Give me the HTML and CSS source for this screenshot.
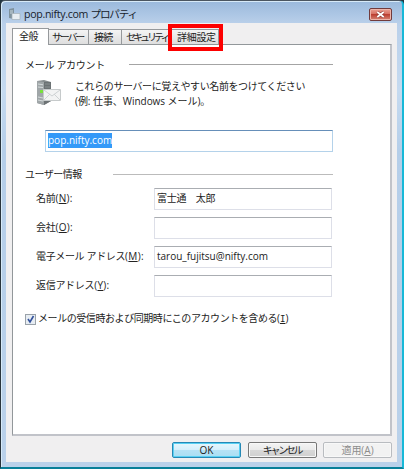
FILE: index.html
```html
<!DOCTYPE html>
<html lang="ja">
<head>
<meta charset="utf-8">
<title>pop.nifty.com プロパティ</title>
<link rel="stylesheet" href="styles.css">
</head>
<body>
<div class="window">
  <header class="titlebar">
    <svg class="app-icon" width="13" height="13" viewBox="0 0 13 13">
      <path d="M1 1l5-1v11l-5-1z" fill="#7f929d"/>
      <path d="M2 3h3M2 5h3" stroke="#cad8df"/>
      <path d="M4 5.500h8v6H4z" fill="#e8eef2" stroke="#a5b0b7" stroke-width=".7"/>
    </svg>
    <h1 class="caption">pop.nifty.com <span>プロパティ</span></h1>
    <button class="close" aria-label="閉じる">
      <svg width="9" height="7" viewBox="0 0 9 7"><path d="M1.3 1l6.4 5M7.7 1L1.3 6" stroke="#8b3731" stroke-width="3"/><path d="M1.3 1l6.4 5M7.7 1L1.3 6" stroke="#fff" stroke-width="1.8"/></svg>
    </button>
  </header>
  <main class="client">
    <nav class="tabs">
      <div class="tab active"><span>全般</span></div>
      <div class="tab server"><span>サーバー</span></div>
      <div class="tab connect"><span>接続</span></div>
      <div class="tab security"><span>セキュリティ</span></div>
      <div class="tab detail"><span>詳細設定</span><i class="marker"></i></div>
    </nav>
    <section class="panel">
      <div class="heading account"><span>メール アカウント</span><i class="rule"></i></div>
      <div class="intro">
        <svg class="server-icon" width="25" height="26" viewBox="0 0 25 26">
          <path d="M1 1l7-1 7 2v19l-7 4-7-2z" fill="#858b8d"/>
          <path d="M1 1l7 1v23l-7-2z" fill="#a0a6a8"/>
          <path d="M8 2l7 0v19l-7 4z" fill="#6c7274"/>
          <path d="M2 4l5 .7M2 7l5 .5M2 17l5 1M2 20l5 1" stroke="#d3d9da" stroke-width="1.1"/>
          <path d="M9 4h5M9 7h5" stroke="#899092"/>
          <path d="M7.500 9.500h17v11h-17z" fill="#f2f3f3" stroke="#c6cacb"/>
          <path d="M8 10l8 6 8-6M8 20l6-6M24 20l-6-6" fill="none" stroke="#ced2d3"/>
          <rect x="4" y="10" width="3" height="3" fill="#78e13c"/>
        </svg>
        <p class="hint"><span class="line1">これらのサーバーに覚えやすい名前をつけてください</span><br><span class="line2">(例: 仕事、Windows メール)。</span></p>
      </div>
      <div class="input focused"><span class="selected">pop.nifty.com</span></div>
      <div class="heading user"><span>ユーザー情報</span><i class="rule"></i></div>
      <div class="form">
        <div class="row"><label>名前<b>(<u>N</u>):</b></label><div class="input"><span class="name">富士通　太郎</span></div></div>
        <div class="row"><label>会社<b>(<u>O</u>):</b></label><div class="input"></div></div>
        <div class="row"><label class="mail">電子メール アドレス<b>(<u>M</u>):</b></label><div class="input"><span class="address">tarou_fujitsu@nifty.com</span></div></div>
        <div class="row"><label class="reply">返信アドレス<b>(<u>Y</u>):</b></label><div class="input"></div></div>
      </div>
      <div class="check">
        <svg width="11" height="11" viewBox="0 0 11 11"><rect x=".5" y=".5" width="10" height="10" fill="#e7edf3" stroke="#9aa2a9"/><path d="M3 5l2 3 3.500-6" fill="none" stroke="#31509b" stroke-width="1.6"/></svg>
        <span>メールの受信時および同期時にこのアカウントを含める<b>(<u class="serif-i">I</u>)</b></span>
      </div>
    </section>
    <footer class="buttons">
      <button class="button default">OK</button>
      <button class="button cancel"><span>キャンセル</span></button>
      <button class="button disabled">適用(<u>A</u>)</button>
    </footer>
  </main>
</div>
</body>
</html>
```
FILE: styles.css
```css
* { box-sizing: border-box; }
body { margin: 0; background: #223642; color: #222; font: 10px/15px "Open Sans", "Noto Sans CJK JP", sans-serif; }
button { font: inherit; padding: 0; }
b { font-weight: 400; }
u { text-underline-offset: 1px; text-decoration-thickness: 1px; }
.window {
  width: 404px; height: 469px; padding: 0 5px;
  border: 1px solid #29343c; border-right: 2px solid #17b8d8; border-bottom: 2px solid #087f99;
  border-top-color: #4b5661; border-radius: 5px 5px 0 0;
  background: linear-gradient(#9ab9dc, #bad0ea 23px, #c5daf0 90px, #b5cee9 150px, #bad1ea);
  box-shadow: inset 1px 1px #d7eaf8;
}
.titlebar { height: 22px; display: flex; align-items: center; padding-left: 2px; }
.app-icon { margin-top: 5px; }
.caption { margin: 4px 0 0 3px; font-size: 10.6px; letter-spacing: -.3px; line-height: 16px; font-weight: 400; color: #17212b; white-space: nowrap; }
.caption span { letter-spacing: -1.2px; }
.close { width: 23px; height: 13px; margin: 5px 5px 0 auto; display: grid; place-items: center; border: 1px solid #713b3c; border-radius: 2px; background: linear-gradient(#eaa093, #d77163 45%, #bc3e31 50%, #d78575); box-shadow: inset 0 0 0 1px #edb4aa; }
.client { height: 439px; padding: 5px 5px 0 6px; background: #f0eff0; }
.tabs { height: 16px; display: flex; align-items: flex-end; }
.tab { position: relative; height: 15px; border: 1px solid #96999c; border-left-width: 0; border-bottom: 0; background: linear-gradient(#f4f4f4, #e9e9e9 50%, #dedede); line-height: 15px; white-space: nowrap; padding-left: 4px; }
.tab.active { width: 37px; height: 17px; margin-bottom: -1px; border-left-width: 1px; padding-left: 6px; letter-spacing: -.5px; background: #fff; z-index: 1; }
.server { width: 40px; padding-left: 3px; letter-spacing: -2.2px; }
.connect { width: 33px; padding-left: 5px; letter-spacing: -.8px; }
.security { width: 50px; padding-left: 4px; letter-spacing: -3px; }
.detail { width: 47px; padding-left: 5px; letter-spacing: -.3px; }
.marker { position: absolute; left: -4px; top: -6px; width: 55px; height: 27px; border: 4px solid #fd0000; z-index: 2; }
.panel { width: 380px; height: 392px; padding-top: 12px; background: #fff; border: 1px solid #92979a; border-right: 2px solid #c1c3c9; border-bottom: 2px solid #c1c3c9; }
.heading { height: 16px; padding-left: 12px; display: flex; align-items: center; white-space: nowrap; }
.rule { height: 1px; background: #a4a4a4; }
.account span { width: 104px; letter-spacing: -.3px; }
.account .rule { width: 204px; margin-top: -2px; }
.user { margin-top: 14px; }
.user span { width: 88px; letter-spacing: -.5px; }
.user .rule { width: 220px; background: #bbb; }
.intro { display: flex; height: 57px; padding: 7px 0 0 23px; }
.hint { margin: -1px 0 0 14px; white-space: nowrap; }
.line1 { letter-spacing: -.4px; }
.line2 { letter-spacing: -.05px; }
.input { width: 178px; height: 22px; padding: 2px; border: 1px solid #dddfe8; border-top-color: #aaadb2; background: #fff; line-height: 15px; white-space: pre; }
.focused { width: 288px; height: 22px; margin-left: 32px; border-color: #b4d2ea; border-top-color: #668fb9; }
.name { letter-spacing: -.3px; }
.selected { display: inline-block; height: 15px; line-height: 14px; background: #3399f8; color: #fff; }
.form { padding: 6px 0 0 23px; }
.row { height: 29px; display: flex; }
.row label { width: 118px; padding-top: 3px; white-space: nowrap; letter-spacing: -.3px; }
.row label b { letter-spacing: .3px; }
.mail { letter-spacing: -.35px !important; }
.check { display: flex; align-items: center; margin: 7px 0 0 12px; gap: 2px; height: 16px; white-space: nowrap; }
.check span { letter-spacing: -.43px; }
.check b { letter-spacing: 0; }
.serif-i { font-family: "DejaVu Sans Mono", monospace; font-size: 9px; }
.buttons { margin-top: 6px; display: flex; justify-content: flex-end; gap: 6.5px; }
.button { width: 69px; height: 16px; border: 1px solid #777; border-radius: 2px; background: linear-gradient(#f4f4f4, #eaeaea 48%, #d8d8d8 52%, #d0d0d0); color: #222; line-height: 13px; box-shadow: inset 0 0 0 1px #f8f8f8; }
.default { border-color: #2688b5; background: linear-gradient(#e7f7fd, #d5effb 48%, #b5e2f5 52%, #a9def3); box-shadow: inset 0 0 0 1px #58d0f3; }
.cancel { letter-spacing: -2.3px; }
.disabled { border-color: #b9bcc0; background: #f2f2f2; color: #8c8c8c; }
```
